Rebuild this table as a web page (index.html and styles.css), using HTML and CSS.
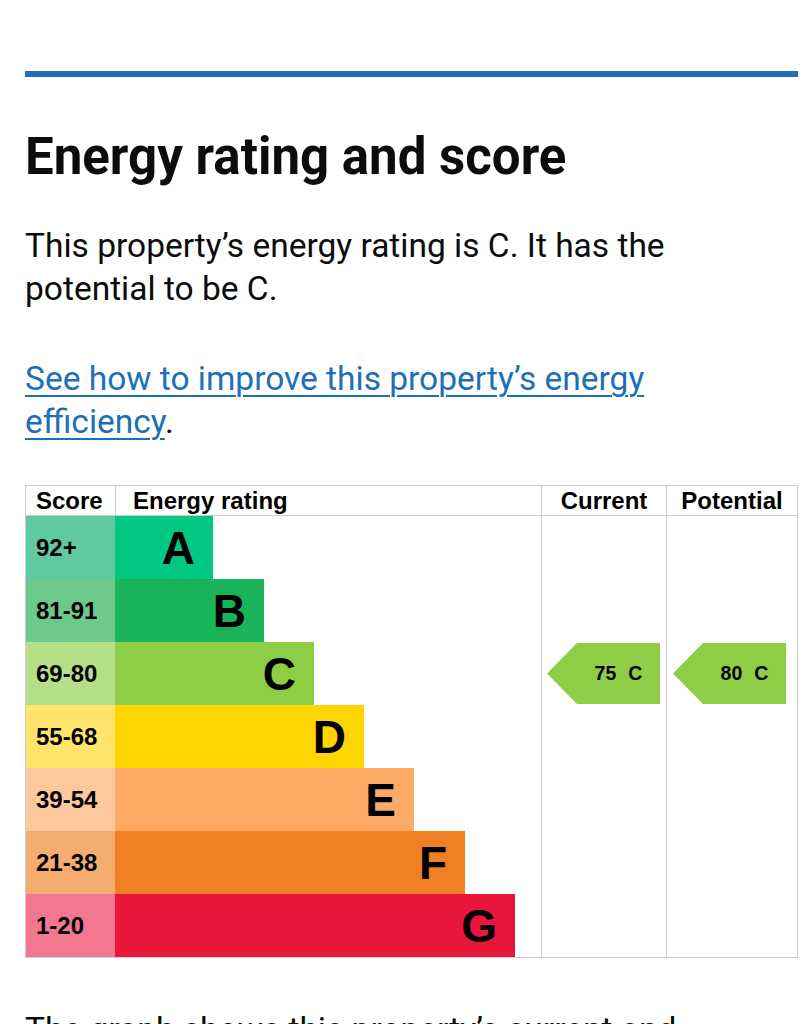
FILE: index.html
```html
<!DOCTYPE html>
<html lang="en">
<head>
<meta charset="utf-8">
<title>Energy rating and score</title>
<link rel="stylesheet" href="styles.css">
</head>
<body>
<main class="page">
  <hr class="rule">
  <h2 class="title">Energy rating and score</h2>
  <p class="lead">This property’s energy rating is C. It has the potential to be C.</p>
  <p class="lead lead-link"><a class="link" href="#">See how to improve this property’s energy efficiency</a>.</p>

  <div class="epc">
    <div class="epc-head">
      <div class="h h-score">Score</div>
      <div class="h h-rating">Energy rating</div>
      <div class="h h-current">Current</div>
      <div class="h h-potential">Potential</div>
    </div>
    <div class="epc-body">
      <div class="score score-a">92+</div>
      <div class="barcell"><div class="bar bar-a" style="width:98px">A</div></div>
      <div class="score score-b">81-91</div>
      <div class="barcell"><div class="bar bar-b" style="width:149px">B</div></div>
      <div class="score score-c">69-80</div>
      <div class="barcell"><div class="bar bar-c" style="width:199px">C</div></div>
      <div class="score score-d">55-68</div>
      <div class="barcell"><div class="bar bar-d" style="width:249px">D</div></div>
      <div class="score score-e">39-54</div>
      <div class="barcell"><div class="bar bar-e" style="width:299px">E</div></div>
      <div class="score score-f">21-38</div>
      <div class="barcell"><div class="bar bar-f" style="width:350px">F</div></div>
      <div class="score score-g">1-20</div>
      <div class="barcell"><div class="bar bar-g" style="width:400px">G</div></div>

      <div class="col col-current"></div>
      <div class="col col-potential"></div>
      <div class="arrow arrow-current"><span>75</span><span>C</span></div>
      <div class="arrow arrow-potential"><span>80</span><span>C</span></div>
    </div>
  </div>

  <p class="lead lead-after">The graph shows this property’s current and potential energy rating.</p>
</main>
</body>
</html>
```

FILE: styles.css
```css
html, body {
  margin: 0;
  padding: 0;
  background: #ffffff;
}

body {
  font-family: Roboto, "Liberation Sans", Arial, sans-serif;
  color: #0b0c0c;
}

.page {
  padding: 71px 13px 0 25px;
}

.rule {
  margin: 0;
  border: 0;
  border-top: 6px solid #1d70b8;
  height: 0;
}

.title {
  margin: 52px 0 0 0;
  font-size: 51px;
  line-height: 56px;
  font-weight: 700;
}

.lead {
  margin: 39px 0 0 0;
  font-size: 33.5px;
  line-height: 43px;
  font-weight: 400;
}

.lead-link {
  margin-top: 47px;
}

.link {
  color: #1d70b8;
  text-decoration: underline;
  text-decoration-thickness: 2px;
  text-underline-offset: 5px;
}

/* EPC graph */
.epc {
  margin-top: 42px;
  width: 773px;
  box-sizing: border-box;
  border: 1px solid #cdcdcd;
  font-family: "Liberation Sans", Arial, sans-serif;
  color: #000;
}

.epc-head {
  display: grid;
  grid-template-columns: 89px 426px 125px 131px;
  height: 29px;
  border-bottom: 1px solid #cdcdcd;
}

.h {
  font-size: 24px;
  font-weight: 700;
  line-height: 29px;
  white-space: nowrap;
}

.h-score {
  padding-left: 10px;
}

.h-rating {
  border-left: 1px solid #cdcdcd;
  padding-left: 17px;
}

.h-current,
.h-potential {
  border-left: 1px solid #cdcdcd;
  text-align: center;
}

.epc-body {
  display: grid;
  grid-template-columns: 89px 426px 125px 131px;
  grid-template-rows: repeat(7, 63px);
}

.score {
  grid-column: 1;
  display: flex;
  align-items: center;
  padding-left: 10px;
  font-size: 24px;
  font-weight: 700;
}

.barcell {
  grid-column: 2;
  display: flex;
}

.bar {
  display: flex;
  align-items: center;
  justify-content: flex-end;
  box-sizing: border-box;
  padding-right: 18px;
  font-size: 46px;
  font-weight: 700;
  height: 100%;
}

.score-a { grid-row: 1; background: #60c9a2; }
.score-b { grid-row: 2; background: #6dc98c; }
.score-c { grid-row: 3; background: #b4df88; }
.score-d { grid-row: 4; background: #ffe46b; }
.score-e { grid-row: 5; background: #fdc89c; }
.score-f { grid-row: 6; background: #f4ac6f; }
.score-g { grid-row: 7; background: #f2778f; }

.barcell:nth-of-type(2)  { grid-row: 1; }
.barcell:nth-of-type(4)  { grid-row: 2; }
.barcell:nth-of-type(6)  { grid-row: 3; }
.barcell:nth-of-type(8)  { grid-row: 4; }
.barcell:nth-of-type(10) { grid-row: 5; }
.barcell:nth-of-type(12) { grid-row: 6; }
.barcell:nth-of-type(14) { grid-row: 7; }

.bar-a { background: #00c781; }
.bar-b { background: #19b459; }
.bar-c { background: #8dce46; }
.bar-d { background: #ffd500; }
.bar-e { background: #fcaa65; }
.bar-f { background: #ef8023; }
.bar-g { background: #e9153b; }

.col {
  grid-row: 1 / -1;
  border-left: 1px solid #cdcdcd;
}

.col-current { grid-column: 3; }
.col-potential { grid-column: 4; }

.arrow {
  grid-row: 3;
  align-self: stretch;
  margin: 1px 0 1px 0;
  width: 113px;
  box-sizing: border-box;
  padding-left: 30px;
  display: flex;
  align-items: center;
  justify-content: center;
  gap: 12px;
  background: #8dce46;
  clip-path: polygon(0 50%, 30px 0, 100% 0, 100% 100%, 30px 100%);
  font-size: 19.5px;
  font-weight: 700;
}

.arrow-current {
  grid-column: 3;
  margin-left: 6px;
}

.arrow-potential {
  grid-column: 4;
  margin-left: 7px;
}

.lead-after {
  margin-top: 50px;
}
```
